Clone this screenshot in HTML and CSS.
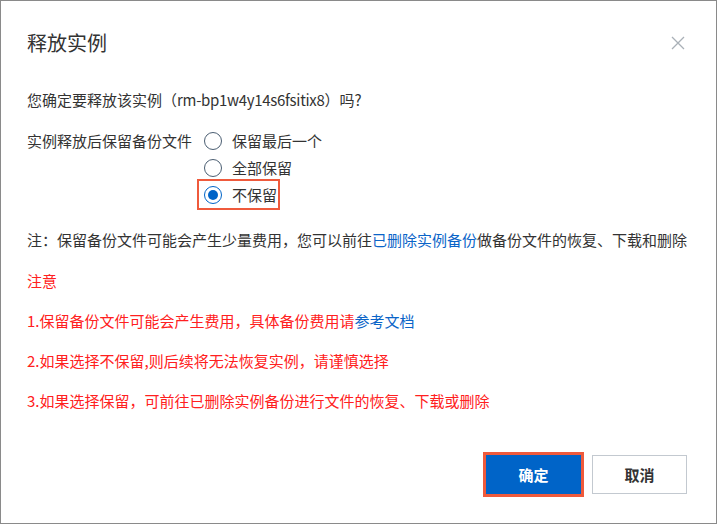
FILE: index.html
```html
<!DOCTYPE html>
<html lang="zh-CN">
<head>
<meta charset="utf-8">
<title>释放实例</title>
<link rel="stylesheet" href="styles.css">
</head>
<body>
<div class="dialog">
  <div class="header">
    <div class="title">释放实例</div>
    <svg class="close" width="14" height="14" viewBox="0 0 14 14"><path d="M1 1L13 13M13 1L1 13" stroke="#a9b0b7" stroke-width="1.3" fill="none"/></svg>
  </div>
  <div class="body">
    <div class="line confirm">您确定要释放该实例（<span class="id">rm-bp1w4y14s6fsitix8</span>）吗?</div>
    <div class="field">
      <div class="label">实例释放后保留备份文件</div>
      <div class="radios">
        <div class="radio-item"><span class="radio"></span><span>保留最后一个</span></div>
        <div class="radio-item"><span class="radio"></span><span>全部保留</span></div>
        <div class="radio-item hl"><span class="radio checked"></span><span>不保留</span></div>
      </div>
    </div>
    <div class="line note">注：保留备份文件可能会产生少量费用，您可以前往<span class="link">已删除实例备份</span>做备份文件的恢复、下载和删除</div>
    <div class="warn">
      <div class="line red">注意</div>
      <div class="line red">1.保留备份文件可能会产生费用，具体备份费用请<span class="link">参考文档</span></div>
      <div class="line red">2.如果选择不保留,则后续将无法恢复实例，请谨慎选择</div>
      <div class="line red">3.如果选择保留，可前往已删除实例备份进行文件的恢复、下载或删除</div>
    </div>
  </div>
  <div class="footer">
    <button class="btn primary">确定</button>
    <button class="btn">取消</button>
  </div>
</div>
</body>
</html>
```
FILE: styles.css
```css
* { box-sizing: border-box; }
html, body { margin: 0; padding: 0; background: #fff; }
body {
  font-family: "Noto Sans CJK SC", "Noto Sans", sans-serif;
  color: #333;
  font-size: 15px;
}
.dialog {
  width: 717px;
  height: 524px;
  border: 1px solid #8a8a8a;
  padding: 0 29px 0 26px;
  display: flex;
  flex-direction: column;
}
.header {
  display: flex;
  justify-content: space-between;
  align-items: center;
  height: 20px;
  margin-top: 32px;
}
.title {
  font-size: 20px;
  line-height: 20px;
  color: #333;
}
.close { margin-right: 2px; }
.body { display: flex; flex-direction: column; }
.line { line-height: 20px; white-space: nowrap; }
.confirm { margin-top: 37px; }
.id { letter-spacing: -0.3px; }
.field {
  display: flex;
  margin-top: 17px;
}
.label {
  line-height: 27px;
  margin-right: 12px;
}
.radios {
  display: flex;
  flex-direction: column;
  align-items: flex-start;
}
.radio-item {
  display: flex;
  align-items: center;
  height: 27px;
  gap: 10px;
  position: relative;
}
.radio {
  width: 18px;
  height: 18px;
  border: 1px solid #4b5e72;
  border-radius: 50%;
  display: inline-flex;
  align-items: center;
  justify-content: center;
}
.radio.checked { border-color: #0064c8; }
.radio.checked::after {
  content: "";
  width: 10px;
  height: 10px;
  border-radius: 50%;
  background: #0064c8;
}
.hl::before {
  content: "";
  position: absolute;
  left: -7px;
  right: -3px;
  top: -2px;
  bottom: -2px;
  border: 2px solid #ef5a3c;
}
.note { margin-top: 22px; }
.link { color: #0a64c8; }
.warn {
  display: flex;
  flex-direction: column;
  gap: 20px;
  margin-top: 21px;
}
.red { color: #ff2020; }
.footer {
  margin-top: auto;
  margin-bottom: 29px;
  display: flex;
  justify-content: flex-end;
  gap: 11px;
}
.btn {
  width: 95px;
  height: 39px;
  border: 1px solid #c3c9d0;
  background: #fff;
  color: #333;
  font-family: "Noto Sans CJK SC", sans-serif;
  font-size: 15px;
  font-weight: bold;
  padding: 0;
}
.btn.primary {
  background: #0064c8;
  border-color: #0064c8;
  color: #fff;
  outline: 3px solid #ef5a3c;
  outline-offset: 0;
}
```
